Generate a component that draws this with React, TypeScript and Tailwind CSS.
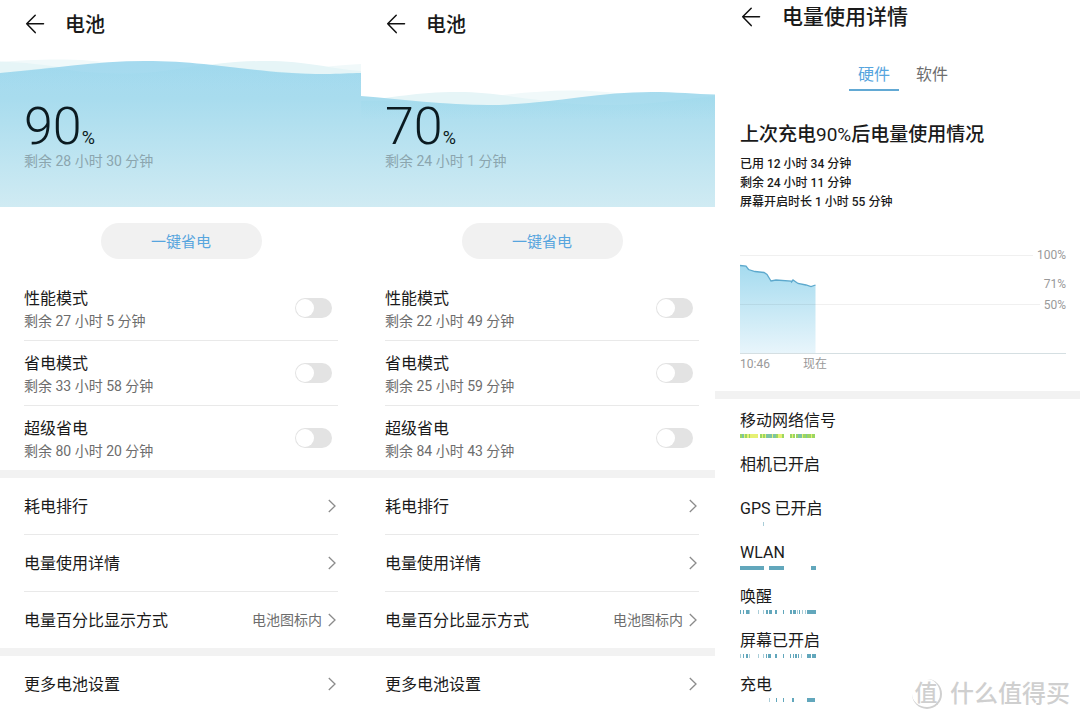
import { useState } from "react";

type Mode = { name: string; left: string };

type BatteryProps = {
  id: string;
  percent: number;
  left: string;
  modes: Mode[];
  waves: { front: string; back: string; far: string; inner: string; width: number };
  pad: string;
};

type Bar = [start: number, width: number, color?: string];

const TEAL = "#62a7bc";

function BackArrow() {
  return (
    <svg viewBox="0 0 20 20" className="h-5 w-5" fill="none" stroke="#111" strokeWidth="1.5" strokeLinecap="round" strokeLinejoin="round">
      <path d="M18.5 9.7H1.7M10.2 1.2 1.7 9.7l8.5 8.9" />
    </svg>
  );
}

function Chevron() {
  return (
    <svg viewBox="0 0 8 14" className="h-3.5 w-2 shrink-0" fill="none" stroke="#8c8c8c" strokeWidth="1.3">
      <path d="M.8 1 7 7 .8 13" />
    </svg>
  );
}

function Battery({ id, percent, left, modes, waves, pad }: BatteryProps) {
  const [on, setOn] = useState<Record<string, boolean>>({});
  return (
    <section className="min-w-0">
      <header className="flex h-12 items-center gap-5 pl-[25px]">
        <button type="button" aria-label="返回">
          <BackArrow />
        </button>
        <h1 className="pt-0.5 text-[20px] font-medium leading-7">电池</h1>
      </header>

      <div className="relative flex h-[159px] flex-col justify-end pb-9 pl-6">
        <svg viewBox={`0 48 ${waves.width} 159`} preserveAspectRatio="none" className="absolute inset-0 h-full w-full">
          <defs>
            <linearGradient id={id} gradientUnits="userSpaceOnUse" x1="0" y1="62" x2="0" y2="207">
              <stop offset="0" stopColor="#a5daef" />
              <stop offset="0.25" stopColor="#a8dcee" />
              <stop offset="1" stopColor="#d0ebf3" />
            </linearGradient>
            <linearGradient id={`${id}-inner`} x1="0" y1="0" x2="0" y2="1">
              <stop offset="0.2" stopColor="#93d6ea" stopOpacity="0.2" />
              <stop offset="1" stopColor="#93d6ea" stopOpacity="0" />
            </linearGradient>
          </defs>
          <path d={waves.far} fill="#f1f9fa" />
          <path d={waves.back} fill="#e6f5f7" />
          <path d={waves.front} fill={`url(#${id})`} />
          <path d={waves.inner} fill={`url(#${id}-inner)`} />
        </svg>
        <p className="relative flex items-baseline text-[#0b1a20]">
          <span className="text-[52px] font-light leading-[48px]">{percent}</span>
          <span className="text-[18px] leading-6">%</span>
        </p>
        <p className="relative text-[14px] leading-5 text-[#8ba5ae]">剩余 {left}</p>
      </div>

      <div className={pad}>
        <div className="flex justify-center pt-4">
          <button type="button" className="h-9 w-[161px] rounded-full bg-[#f1f1f1] pt-0.5 text-[15px] text-[#57a5de]">
            一键省电
          </button>
        </div>
        <ul className="mt-[17px] divide-y divide-[#e9e9e9]">
          {modes.map((m) => (
            <li key={m.name}>
              <label className="flex h-16 items-center justify-between pr-1.5">
                <span className="pt-px">
                  <span className="block text-[16px] leading-6">{m.name}</span>
                  <span className="block text-[14px] leading-5 text-[#6d6d6d]">剩余 {m.left}</span>
                </span>
                <input
                  type="checkbox"
                  checked={!!on[m.name]}
                  onChange={(e) => setOn({ ...on, [m.name]: e.target.checked })}
                  className="flex h-5 w-[37px] appearance-none items-center rounded-full bg-[#e3e3e3] px-px before:h-[18px] before:w-[18px] before:rounded-full before:bg-white checked:justify-end checked:bg-[#57a5de]"
                />
              </label>
            </li>
          ))}
        </ul>
      </div>

      <div className="h-2 bg-[#f2f2f2]" />
      <nav className={pad}>
        <ul className="divide-y divide-[#e9e9e9]">
          {[["耗电排行", ""], ["电量使用详情", ""], ["电量百分比显示方式", "电池图标内"]].map(([name, value]) => (
            <li key={name}>
              <a href="#" className="flex h-14 items-center gap-1.5 pr-0.5">
                <span className="flex-1 pt-0.5 text-[16px]">{name}</span>
                <span className="text-[14px] text-[#6d6d6d]">{value}</span>
                <Chevron />
              </a>
            </li>
          ))}
        </ul>
      </nav>
      <div className="h-2 bg-[#f2f2f2]" />
      <nav className={pad}>
        <a href="#" className="flex h-14 items-center justify-between pr-0.5">
          <span className="pt-0.5 text-[16px]">更多电池设置</span>
          <Chevron />
        </a>
      </nav>
    </section>
  );
}

const G = "#9bd662";
const Y = "#e6f073";
const B = "#7cc4a4";
const PALE = "#a9cdd8";

const usage: { name: string; bars: Bar[] }[] = [
  {
    name: "移动网络信号",
    bars: [
      [0, 2, G], [2, 2, B], [4, 1, Y], [5, 2, G], [7, 2, Y], [9, 1, G], [10, 8, Y],
      [20, 2, G], [22, 1, Y], [23, 2, G], [25, 1, Y], [26, 6, B], [32, 1, Y], [33, 3, B], [36, 2, G], [38, 4, Y], [42, 2, G],
      [50, 2, G], [52, 1, Y], [53, 2, G], [56, 2, G], [58, 4, B], [62, 1, Y], [63, 3, G], [66, 1, B], [67, 4, G], [71, 1, Y], [72, 3, G],
    ],
  },
  { name: "相机已开启", bars: [] },
  { name: "GPS 已开启", bars: [[23, 1, PALE]] },
  { name: "WLAN", bars: [[0, 23.5], [29, 14.5], [71, 4.5]] },
  {
    name: "唤醒",
    bars: [[0, 1], [3, 1], [6, 3], [9, 1, PALE], [18, 1, PALE], [23, 1, PALE], [26, 2], [28.5, 3.5], [35, 2], [43, 1], [50, 2], [52.5, 2], [55, 1], [57, 1, PALE], [59, 1], [62, 1, PALE], [65, 1, PALE], [67, 8.5]],
  },
  {
    name: "屏幕已开启",
    bars: [[0, 1, PALE], [3, 1], [6, 2], [9, 1, PALE], [18, 1, PALE], [23, 1, PALE], [26, 1], [28, 3], [35, 2], [43, 1], [50, 1], [53, 1], [55, 2], [58, 1], [61, 1, PALE], [67, 4], [71.5, 4]],
  },
  { name: "充电", bars: [[29, 1, PALE], [36, 1], [43, 1], [52, 1.5], [67, 8]] },
];

function Details() {
  const [tab, setTab] = useState(0);
  return (
    <section className="min-w-0">
      <header className="flex h-[34px] items-center gap-[21px] pl-[26px]">
        <button type="button" aria-label="返回">
          <BackArrow />
        </button>
        <h1 className="text-[21px] font-medium leading-7">电量使用详情</h1>
      </header>

      <div className="pl-[25px] pr-3.5">
        <div role="tablist" className="mt-6 flex justify-center gap-2 text-[16px]">
          {["硬件", "软件"].map((t, i) => (
            <button
              key={t}
              type="button"
              role="tab"
              aria-selected={tab === i}
              onClick={() => setTab(i)}
              className={
                tab === i
                  ? "h-[33px] w-[50px] border-b-2 border-[#62a9d4] pt-0.5 text-[#57a5de]"
                  : "h-[33px] w-[50px] border-b-2 border-transparent pt-0.5 text-[#6d6d6d]"
              }
            >
              {t}
            </button>
          ))}
        </div>

        <h2 className="mt-[30px] text-[19px] font-medium leading-7">
          上次充电<span className="font-normal">90%</span>后电量使用情况
        </h2>
        <div className="mt-1.5 text-[12px] font-medium leading-[19px]">
          <p>已用 12 小时 34 分钟</p>
          <p>剩余 24 小时 11 分钟</p>
          <p>屏幕开启时长 1 小时 55 分钟</p>
        </div>

        <div className="relative mt-[35px] text-[12px] leading-4 text-[#999]">
          <svg className="block h-[107px] w-full">
            <defs>
              <linearGradient id="level" x1="0" y1="0" x2="0" y2="1">
                <stop offset="0" stopColor="#a5dbef" />
                <stop offset="1" stopColor="#e8f5fb" />
              </linearGradient>
            </defs>
            <path d="M0 18.5 6 19 8.5 22.5 15 24.5 24 25.5 27 27.5 31 34 36 33 51 34 53 33 58 36.5 66 38 71 39.5 75.5 38V106H0Z" fill="url(#level)" />
            <path d="M0 18.5 6 19 8.5 22.5 15 24.5 24 25.5 27 27.5 31 34 36 33 51 34 51.5 35 53 33 58 36.5 66 38 71 39.5 75.5 38" fill="none" stroke="#5da9cd" strokeWidth="1.3" />
            <line x1="0" x2="100%" y1="8.5" y2="8.5" stroke="#000" strokeOpacity="0.06" />
            <line x1="0" x2="100%" y1="57.5" y2="57.5" stroke="#000" strokeOpacity="0.06" />
            <line x1="0" x2="100%" y1="106.5" y2="106.5" stroke="#d5dfe2" />
          </svg>
          <span className="absolute right-0 top-0 bg-white pl-1">100%</span>
          <span className="absolute right-0 top-[29px] bg-white pl-1">71%</span>
          <span className="absolute right-0 top-[50px] bg-white pl-1">50%</span>
          <div className="flex w-[87px] justify-between pt-0.5">
            <span>10:46</span>
            <span>现在</span>
          </div>
        </div>
      </div>

      <div className="mt-[19px] h-2 bg-[#f2f2f2]" />
      <ul className="pl-[25px] pt-2.5">
        {usage.map((u) => (
          <li key={u.name} className="h-11">
            <p className="text-[16px] leading-6">{u.name}</p>
            <svg viewBox="0 0 76 5" className="mt-px block h-[5px] w-[76px]" shapeRendering="crispEdges">
              {u.bars.map(([x, w, color]) => (
                <rect key={x} x={x} y="0" width={w} height="4" fill={color ?? TEAL} />
              ))}
            </svg>
          </li>
        ))}
      </ul>
    </section>
  );
}

export default function App() {
  return (
    <main className="relative grid grid-cols-[361fr_354fr_365fr] bg-white font-['Roboto','Noto_Sans_CJK_SC',sans-serif] text-[#1a1a1a]">
      <Battery
        id="water-90"
        percent={90}
        left="28 小时 30 分钟"
        modes={[
          { name: "性能模式", left: "27 小时 5 分钟" },
          { name: "省电模式", left: "33 小时 58 分钟" },
          { name: "超级省电", left: "80 小时 20 分钟" },
        ]}
        waves={{
          width: 361,
          far: "M0 62C25 60 45 59.5 65 59.5 110 59.5 150 72 220 73 280 74 320 66 361 64V100H0Z",
          back: "M0 61.5C50 63 80 73 125 73 180 73 210 61 265 61 310 61 330 69 361 71V100H0Z",
          front: "M0 73C50 69 95 61 145 61 215 61 255 74 325 74 340 74 350 73 361 73V207H0Z",
          inner: "M0 73C20 71 38 69 50 67.5 80 72 100 73.5 125 73.5 160 73.5 185 67 205 64.5 240 68 290 74 325 74 340 74 350 73 361 73V90H0Z",
        }}
        pad="pl-6 pr-[23px]"
      />
      <Battery
        id="water-70"
        percent={70}
        left="24 小时 1 分钟"
        modes={[
          { name: "性能模式", left: "22 小时 49 分钟" },
          { name: "省电模式", left: "25 小时 59 分钟" },
          { name: "超级省电", left: "84 小时 43 分钟" },
        ]}
        waves={{
          width: 354,
          far: "M0 104C100 104 150 90.5 210 90.5 250 90.5 300 98 354 103V130H0Z",
          back: "M0 101C30 98 55 92 97 92 140 92 170 102 230 104 300 105 330 96 354 95V130H0Z",
          front: "M0 96C40 99 85 105 127 105 185 105 235 92 290 92 315 92 335 94 354 94.5V207H0Z",
          inner: "M0 101C60 100 85 105 127 105 150 105 170 103 185 101.5 210 104 230 105 250 105 290 105 320 99 354 96V120H0Z",
        }}
        pad="pl-6 pr-4"
      />
      <Details />

      <div className="absolute bottom-[7px] right-2.5 flex items-center gap-2 text-[#cfcfcf]">
        <span className="flex h-[30px] w-[30px] items-center justify-center rounded-full border-b-2 border-r-2 border-[#d0d0d0] text-[23px] font-medium leading-none">
          值
        </span>
        <span className="text-[24px] font-medium leading-8">什么值得买</span>
      </div>
    </main>
  );
}
